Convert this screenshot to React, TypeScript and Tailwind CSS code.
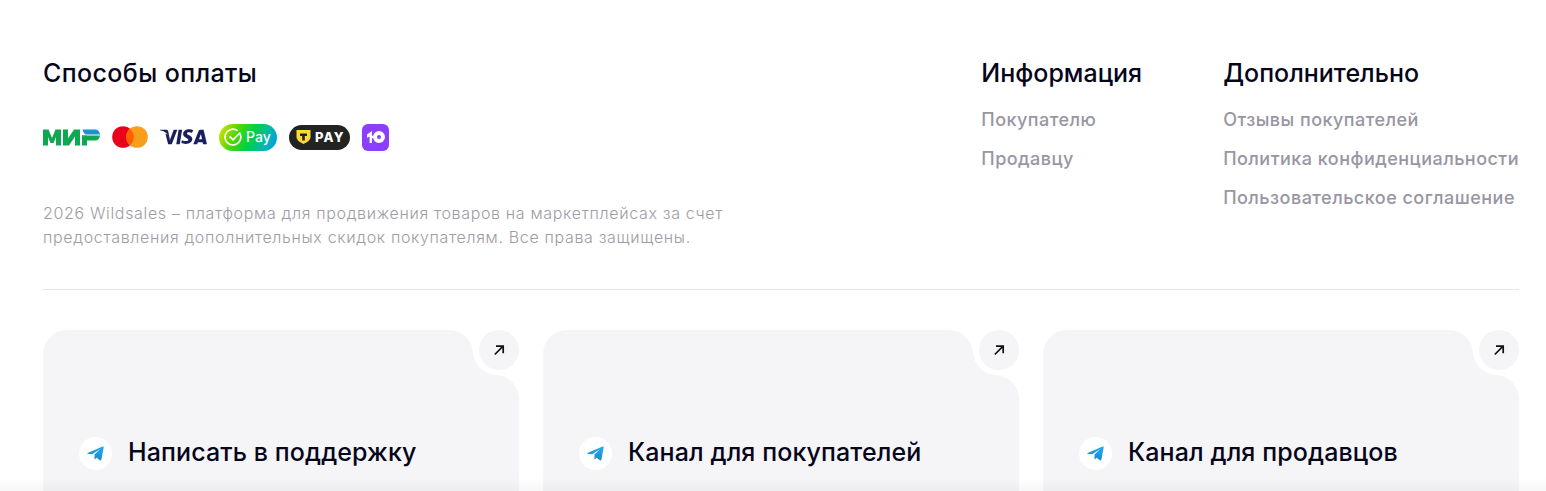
function TelegramIcon() {
  return (
    <svg width="17" height="15" viewBox="0 0 17 15">
      <defs>
        <linearGradient id="tg" x1="0.7" y1="0" x2="0.4" y2="1">
          <stop offset="0" stopColor="#2aa8ec" />
          <stop offset="1" stopColor="#1689d0" />
        </linearGradient>
      </defs>
      <path d="M0.4 6.900 15.600.6c.7-.3 1.300.1 1.100 1L14.400 13.600c-.2.9-.8 1.100-1.500.7L9.600 11.800 8 13.300c-.2.2-.5.1-.5-.2V8.600L13 3.200 5.200 8.300.6 7.700c-.4-.1-.5-.6-.2-.8Z" fill="url(#tg)" />
    </svg>
  );
}

function ArrowIcon() {
  return (
    <svg width="12" height="12" viewBox="0 0 12 12" fill="none" stroke="#111" strokeWidth="1.700">
      <path d="M1.800 10.500 9.600 2.700M3 2.200h7.200V9.200" />
    </svg>
  );
}

function MirLogo() {
  return (
    <svg width="57" height="17" viewBox="0 0 57 17">
      <path d="M0 .5h5.500L9 9 12.500.5H18v16h-5V8l-2.500 6h-3L5 8v8.500H0Z" fill="#0fa750" />
      <path d="M20 .5h5v9l6-9h6v16h-5V7.500l-6 9h-6Z" fill="#0fa750" />
      <path d="M39 6.500h5v10h-5Z" fill="#0fa750" />
      <path d="M39 6.500h18c-.3 3-2.200 5-5 5H39Z" fill="#0fa750" />
      <path d="M39.500.5H52c3 0 4.600 2 5 5H44c-2 0-4-2-4.500-5Z" fill="#1b93d3" />
    </svg>
  );
}

function MastercardLogo() {
  return (
    <svg width="36" height="22" viewBox="0 0 36 22">
      <circle cx="11" cy="11" r="10.800" fill="#eb001b" />
      <circle cx="25" cy="11" r="10.800" fill="#f79e1b" />
      <path d="M18 2.700a10.800 10.800 0 0 1 0 16.600 10.800 10.800 0 0 1 0-16.600Z" fill="#ff5f00" />
    </svg>
  );
}

function VisaLogo() {
  return (
    <svg width="47" height="16" viewBox="0 0 48 16">
      <path d="M0 .5h6.500c1 0 1.700.6 1.900 1.500l1.500 8L6.500 4C5 2.500 2.500 1.300 0 1Z" fill="#1a1f5e" />
      <path d="M14 .5h3.700L12 15.500H8.300L5.500 4.500c2 1 3.500 2.500 4.200 4.500l.4 2Z" fill="#1a1f5e" />
      <path d="M19 .5h3.600l-2.400 15h-3.600Z" fill="#1a1f5e" />
      <path d="M34 1c-1-.4-2.300-.8-4-.8-3.700 0-6.400 2-6.400 4.800 0 2.100 1.900 3.300 3.300 4 1.500.7 2 1.100 2 1.800 0 1-1.200 1.400-2.300 1.400-1.500 0-2.800-.3-4.200-1l-.6 3c1.200.5 2.800.9 4.500.9 4 0 6.600-2 6.700-5 0-1.700-1-3-3.300-4-1.300-.7-2.200-1.100-2.200-1.800 0-.6.700-1.200 2.100-1.200 1.200 0 2.200.3 3 .6Z" fill="#1a1f5e" />
      <path fillRule="evenodd" d="M44.500.5h-3c-.9 0-1.600.3-2 1.200L34 15.500h3.900l.8-2.200h4.800l.4 2.200H48ZM39.800 10.400l2-5.500 1.100 5.500Z" fill="#1a1f5e" />
    </svg>
  );
}

function SberPay() {
  return (
    <div className="flex h-[27px] w-[58px] items-center gap-[4px] rounded-full bg-[linear-gradient(115deg,#e8e400_0%,#55d800_28%,#00cf45_55%,#00b8b0_78%,#0098f0_100%)] pl-[5px]">
      <svg width="18" height="18" viewBox="0 0 16 16" fill="none" stroke="#fff" strokeWidth="1.500">
        <path d="M14.200 5A7 7 0 1 1 12 2.400" />
        <path d="M5 7.500 8 10.500 14.500 4" />
      </svg>
      <span className="text-[14px] font-medium leading-none text-white">Pay</span>
    </div>
  );
}

function TPay() {
  return (
    <div className="flex h-[25px] w-[61px] items-center gap-[4px] rounded-full bg-[#232321] pl-[7px]">
      <svg width="15" height="14" viewBox="0 0 14 14">
        <path d="M0 0h14v7c0 3-3 5-7 7-4-2-7-4-7-7Z" fill="#fadb3c" />
        <path d="M3.500 3.500h7V6H8.300v4.500H5.700V6H3.500Z" fill="#232321" />
      </svg>
      <span className="text-[13px] font-extrabold leading-none tracking-[0.09em] text-white">PAY</span>
    </div>
  );
}

function YooLogo() {
  return (
    <div className="flex h-[27px] w-[27px] items-center justify-center rounded-[6px] bg-[#8b3ffd]">
      <svg width="18" height="12" viewBox="0 0 18 12">
        <path d="M0 3.600 5 0v12H2.600V5.400L0 6.800Z" fill="#fff" />
        <path d="M4 4.800h3v2.400H4Z" fill="#fff" />
        <path fillRule="evenodd" d="M12 0a6 6 0 1 1 0 12 6 6 0 0 1 0-12ZM12 4a2 2 0 1 0 0 4 2 2 0 0 0 0-4Z" fill="#fff" />
      </svg>
    </div>
  );
}

function ContactCard({ title }: { title: string }) {
  return (
    <div className="relative h-[200px]">
      <div className="relative h-full overflow-hidden rounded-[24px] bg-[#f5f5f7]">
        <div className="absolute right-0 top-0 h-[45px] w-[46px] rounded-bl-[24px] bg-white" />
        <div className="absolute right-[46px] top-0 h-6 w-6 rounded-tr-[24px] shadow-[6px_-6px_0_6px_#fff]" />
        <div className="absolute right-0 top-[45px] h-6 w-6 rounded-tr-[24px] shadow-[6px_-6px_0_6px_#fff]" />
        <div className="flex items-center gap-4 pl-9 pt-[107px]">
          <div className="flex h-[33px] w-[33px] items-center justify-center rounded-full bg-white">
            <TelegramIcon />
          </div>
          <span className="-translate-y-[2px] text-[25px] font-medium leading-[32px] tracking-[0.1px] text-[#06061a]">{title}</span>
        </div>
      </div>
      <div className="absolute right-0 top-0 flex h-10 w-10 items-center justify-center rounded-full bg-[#f5f5f7]">
        <ArrowIcon />
      </div>
    </div>
  );
}

export default function App() {
  return (
    <div className="relative h-screen overflow-hidden bg-white font-['Inter',sans-serif]">
      <footer className="pl-[43px] pr-[27px] pt-[58px]">
        <div className="flex justify-between border-b border-[#e6e6e9] pb-[40px]">
          <div>
            <h3 className="text-[25px] font-medium leading-[30px] tracking-[0.4px] text-[#06061a]">Способы оплаты</h3>
            <div className="mt-[34px] flex h-[30px] items-center gap-3">
              <MirLogo />
              <MastercardLogo />
              <VisaLogo />
              <SberPay />
              <TPay />
              <YooLogo />
            </div>
            <p className="mt-[49px] w-[720px] text-[16px] font-light leading-[24px] tracking-[0.66px] text-[#9e9ca4]">
              2026 Wildsales – платформа для продвижения товаров на маркетплейсах за счет предоставления дополнительных скидок покупателям. Все права защищены.
            </p>
          </div>
          <div className="flex gap-[81px]">
            <div>
              <h3 className="text-[25px] font-medium leading-[30px] text-[#06061a]">Информация</h3>
              <ul className="mt-[20px] flex flex-col gap-[15px] text-[18px] font-medium leading-[24px] tracking-[0.47px] text-[#9896a2]">
                <li>Покупателю</li>
                <li>Продавцу</li>
              </ul>
            </div>
            <div>
              <h3 className="text-[25px] font-medium leading-[30px] text-[#06061a]">Дополнительно</h3>
              <ul className="mt-[20px] flex flex-col gap-[15px] text-[18px] font-medium leading-[24px] tracking-[0.47px] text-[#9896a2]">
                <li>Отзывы покупателей</li>
                <li>Политика конфиденциальности</li>
                <li>Пользовательское соглашение</li>
              </ul>
            </div>
          </div>
        </div>
        <div className="mt-10 grid grid-cols-3 gap-6">
          <ContactCard title="Написать в поддержку" />
          <ContactCard title="Канал для покупателей" />
          <ContactCard title="Канал для продавцов" />
        </div>
      </footer>
      <div className="pointer-events-none absolute inset-x-0 bottom-0 h-[14px] bg-gradient-to-t from-black/[0.03] to-transparent" />
    </div>
  );
}
